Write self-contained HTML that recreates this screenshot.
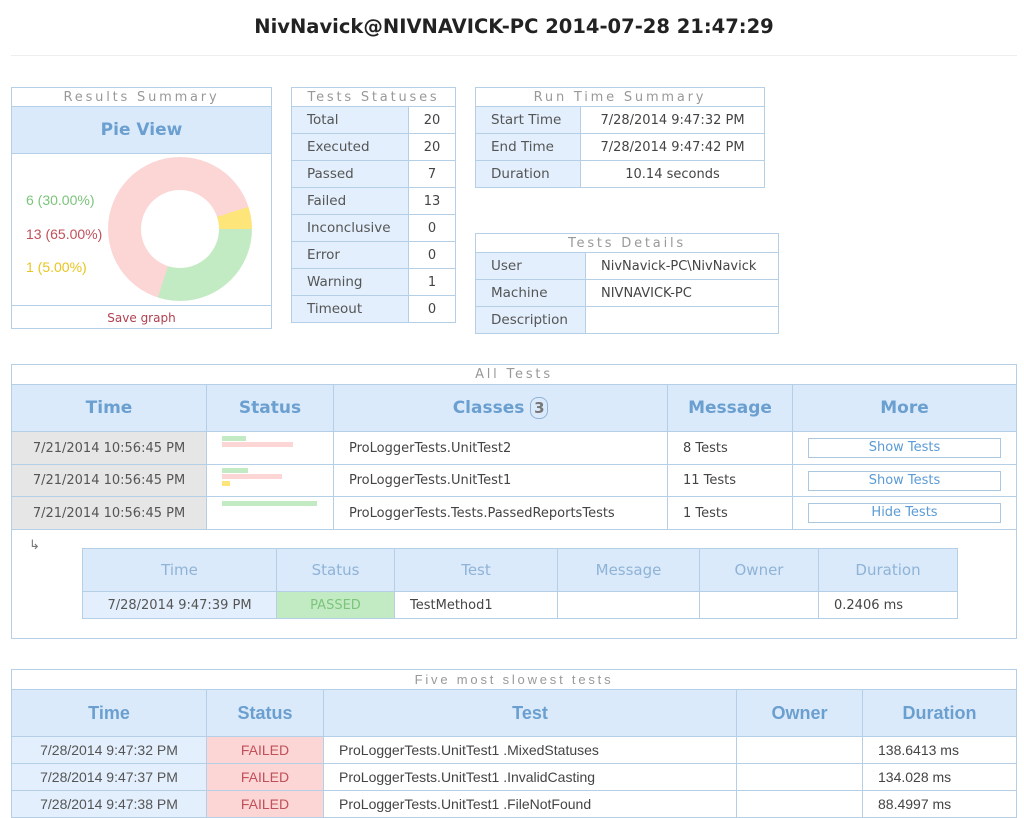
<!DOCTYPE html>
<html><head><meta charset="utf-8"><style>
*{box-sizing:border-box;margin:0;padding:0}
body{width:1024px;height:813px;overflow:hidden;background:#fff;font-family:"DejaVu Sans","Liberation Sans",sans-serif;color:#444;position:relative}
.abs{position:absolute}
table{border-collapse:collapse;table-layout:fixed;position:absolute}
td,th{border:1px solid #b5d0e6;font-size:13px;font-weight:normal;white-space:nowrap;overflow:hidden}
.cap{position:absolute;border:1px solid #b5d0e6;border-bottom:none;text-align:center;color:#999;font-size:13px;letter-spacing:2.8px;background:#fff}
.lb{background:#e3effc;padding-left:15px;color:#555;font-size:13.5px}
.vl{padding-left:15px;color:#444}
.hd{background:#daeafb;color:#6a9fd0;font-weight:bold;font-size:17px;text-align:center}
.hd2{background:#daeafb;color:#8fb3d6;font-size:15px;text-align:center}
.gr{background:#e6e6e6;color:#555;text-align:center}
.btn{display:block;margin:0 auto;width:193px;height:20px;border:1px solid #a9c8e0;color:#5b9bd5;text-align:center;font-size:13px;line-height:18px}
.bar{position:absolute;height:5px}
.ls td{font-family:'Liberation Sans',sans-serif;font-size:14px}
.ls th{font-family:'Liberation Sans',sans-serif;font-size:18px}
</style></head><body>
<div class="abs" style="left:0;width:1028px;top:15px;text-align:center;font-weight:bold;font-size:19.5px;color:#222">NivNavick@NIVNAVICK-PC 2014-07-28 21:47:29</div>
<div class="abs" style="left:11px;width:1006px;top:55px;height:1px;background:#eee"></div>

<div class="cap" style="left:11px;top:87px;width:261px;height:20px;line-height:19px">Results Summary</div>
<div class="abs" style="left:11px;top:106px;width:261px;height:223px;border:1px solid #b5d0e6"></div>
<div class="abs" style="left:11px;top:106px;width:261px;height:48px;background:#daeafb;border:1px solid #b5d0e6;text-align:center;line-height:46px;color:#6a9fd0;font-weight:bold;font-size:17px">Pie View</div>
<div class="abs" style="left:108px;top:157px;width:144px;height:144px;border-radius:50%;background:conic-gradient(from 90deg,#c3ebc3 0 30%,#fcd5d5 30% 95%,#fde57a 95% 100%)"></div>
<div class="abs" style="left:141px;top:190px;width:78px;height:78px;border-radius:50%;background:#fff"></div>
<div class="abs" style="left:26px;top:192px;font-family:'Liberation Sans',sans-serif;font-size:14px;color:#7cc47c">6 (30.00%)</div>
<div class="abs" style="left:26px;top:226px;font-family:'Liberation Sans',sans-serif;font-size:14px;color:#c0505a">13 (65.00%)</div>
<div class="abs" style="left:26px;top:259px;font-family:'Liberation Sans',sans-serif;font-size:14px;color:#e8c520">1 (5.00%)</div>
<div class="abs" style="left:11px;top:305px;width:261px;height:24px;border:1px solid #b5d0e6;text-align:center;line-height:24px;color:#b04050;font-size:12px">Save graph</div>

<div class="cap" style="left:291px;top:87px;width:165px;height:20px;line-height:19px">Tests Statuses</div>
<table style="left:291px;top:106px;width:164px">
<colgroup><col style="width:117px"><col style="width:47px"></colgroup>
<tr style="height:27px"><td class="lb">Total</td><td style="text-align:center">20</td></tr>
<tr style="height:27px"><td class="lb">Executed</td><td style="text-align:center">20</td></tr>
<tr style="height:27px"><td class="lb">Passed</td><td style="text-align:center">7</td></tr>
<tr style="height:27px"><td class="lb">Failed</td><td style="text-align:center">13</td></tr>
<tr style="height:27px"><td class="lb">Inconclusive</td><td style="text-align:center">0</td></tr>
<tr style="height:27px"><td class="lb">Error</td><td style="text-align:center">0</td></tr>
<tr style="height:27px"><td class="lb">Warning</td><td style="text-align:center">1</td></tr>
<tr style="height:27px"><td class="lb">Timeout</td><td style="text-align:center">0</td></tr>
</table>

<div class="cap" style="left:475px;top:87px;width:290px;height:20px;line-height:19px">Run Time Summary</div>
<table style="left:475px;top:106px;width:289px">
<colgroup><col style="width:105px"><col style="width:184px"></colgroup>
<tr style="height:27px"><td class="lb">Start Time</td><td style="text-align:center">7/28/2014 9:47:32 PM</td></tr>
<tr style="height:27px"><td class="lb">End Time</td><td style="text-align:center">7/28/2014 9:47:42 PM</td></tr>
<tr style="height:27px"><td class="lb">Duration</td><td style="text-align:center">10.14 seconds</td></tr>
</table>

<div class="cap" style="left:475px;top:233px;width:304px;height:20px;line-height:19px">Tests Details</div>
<table style="left:475px;top:252px;width:303px">
<colgroup><col style="width:110px"><col style="width:193px"></colgroup>
<tr style="height:27px"><td class="lb">User</td><td class="vl">NivNavick-PC\NivNavick</td></tr>
<tr style="height:27px"><td class="lb">Machine</td><td class="vl">NIVNAVICK-PC</td></tr>
<tr style="height:27px"><td class="lb">Description</td><td></td></tr>
</table>

<div class="abs" style="left:11px;top:364px;width:1006px;height:275px;border:1px solid #b5d0e6"></div>
<div class="abs" style="left:11px;top:367px;width:1006px;text-align:center;color:#999;font-size:13px;letter-spacing:2.8px">All Tests</div>
<table style="left:11px;top:384px;width:1005px">
<colgroup><col style="width:195px"><col style="width:127px"><col style="width:334px"><col style="width:125px"><col style="width:224px"></colgroup>
<tr style="height:47px"><th class="hd">Time</th><th class="hd">Status</th><th class="hd">Classes <span style="display:inline-block;border:1px solid #8fb3d6;border-radius:8px;width:18px;height:22px;line-height:20px;font-size:15px;color:#777">3</span></th><th class="hd">Message</th><th class="hd">More</th></tr>
<tr style="height:33px"><td class="gr">7/21/2014 10:56:45 PM</td><td></td><td class="vl">ProLoggerTests.UnitTest2</td><td class="vl">8 Tests</td><td><span class="btn">Show Tests</span></td></tr>
<tr style="height:32px"><td class="gr">7/21/2014 10:56:45 PM</td><td></td><td class="vl">ProLoggerTests.UnitTest1</td><td class="vl">11 Tests</td><td><span class="btn">Show Tests</span></td></tr>
<tr style="height:33px"><td class="gr">7/21/2014 10:56:45 PM</td><td></td><td class="vl">ProLoggerTests.Tests.PassedReportsTests</td><td class="vl">1 Tests</td><td><span class="btn">Hide Tests</span></td></tr>
</table>
<div class="bar" style="left:222px;top:436px;width:24px;background:#c3ebc3"></div>
<div class="bar" style="left:222px;top:442px;width:71px;background:#fcd5d5"></div>
<div class="bar" style="left:222px;top:468px;width:26px;background:#c3ebc3"></div>
<div class="bar" style="left:222px;top:474px;width:60px;background:#fcd5d5"></div>
<div class="bar" style="left:222px;top:481px;width:8px;background:#fde57a"></div>
<div class="bar" style="left:222px;top:501px;width:95px;background:#c3ebc3"></div>
<div class="abs" style="left:29px;top:538px;font-size:13px;color:#777">↳</div>
<table style="left:82px;top:548px;width:875px">
<colgroup><col style="width:194px"><col style="width:118px"><col style="width:163px"><col style="width:142px"><col style="width:119px"><col style="width:139px"></colgroup>
<tr style="height:43px"><th class="hd2">Time</th><th class="hd2">Status</th><th class="hd2">Test</th><th class="hd2">Message</th><th class="hd2">Owner</th><th class="hd2">Duration</th></tr>
<tr style="height:27px"><td style="background:#e3effc;text-align:center;color:#555">7/28/2014 9:47:39 PM</td><td style="background:#c3ebc3;color:#7cc47c;text-align:center">PASSED</td><td class="vl">TestMethod1</td><td></td><td></td><td class="vl">0.2406 ms</td></tr>
</table>

<div class="cap" style="left:11px;top:669px;width:1006px;height:21px;line-height:20px;font-family:'Liberation Sans',sans-serif">Five most slowest tests</div>
<table class="ls" style="left:11px;top:689px;width:1005px">
<colgroup><col style="width:195px"><col style="width:117px"><col style="width:413px"><col style="width:126px"><col style="width:154px"></colgroup>
<tr style="height:47px"><th class="hd">Time</th><th class="hd">Status</th><th class="hd">Test</th><th class="hd">Owner</th><th class="hd">Duration</th></tr>
<tr style="height:27px"><td style="background:#e3effc;text-align:center;color:#555">7/28/2014 9:47:32 PM</td><td style="background:#fcd5d5;color:#c0505a;text-align:center">FAILED</td><td class="vl">ProLoggerTests.UnitTest1 .MixedStatuses</td><td></td><td class="vl">138.6413 ms</td></tr>
<tr style="height:27px"><td style="background:#e3effc;text-align:center;color:#555">7/28/2014 9:47:37 PM</td><td style="background:#fcd5d5;color:#c0505a;text-align:center">FAILED</td><td class="vl">ProLoggerTests.UnitTest1 .InvalidCasting</td><td></td><td class="vl">134.028 ms</td></tr>
<tr style="height:27px"><td style="background:#e3effc;text-align:center;color:#555">7/28/2014 9:47:38 PM</td><td style="background:#fcd5d5;color:#c0505a;text-align:center">FAILED</td><td class="vl">ProLoggerTests.UnitTest1 .FileNotFound</td><td></td><td class="vl">88.4997 ms</td></tr>
</table>
</body></html>
